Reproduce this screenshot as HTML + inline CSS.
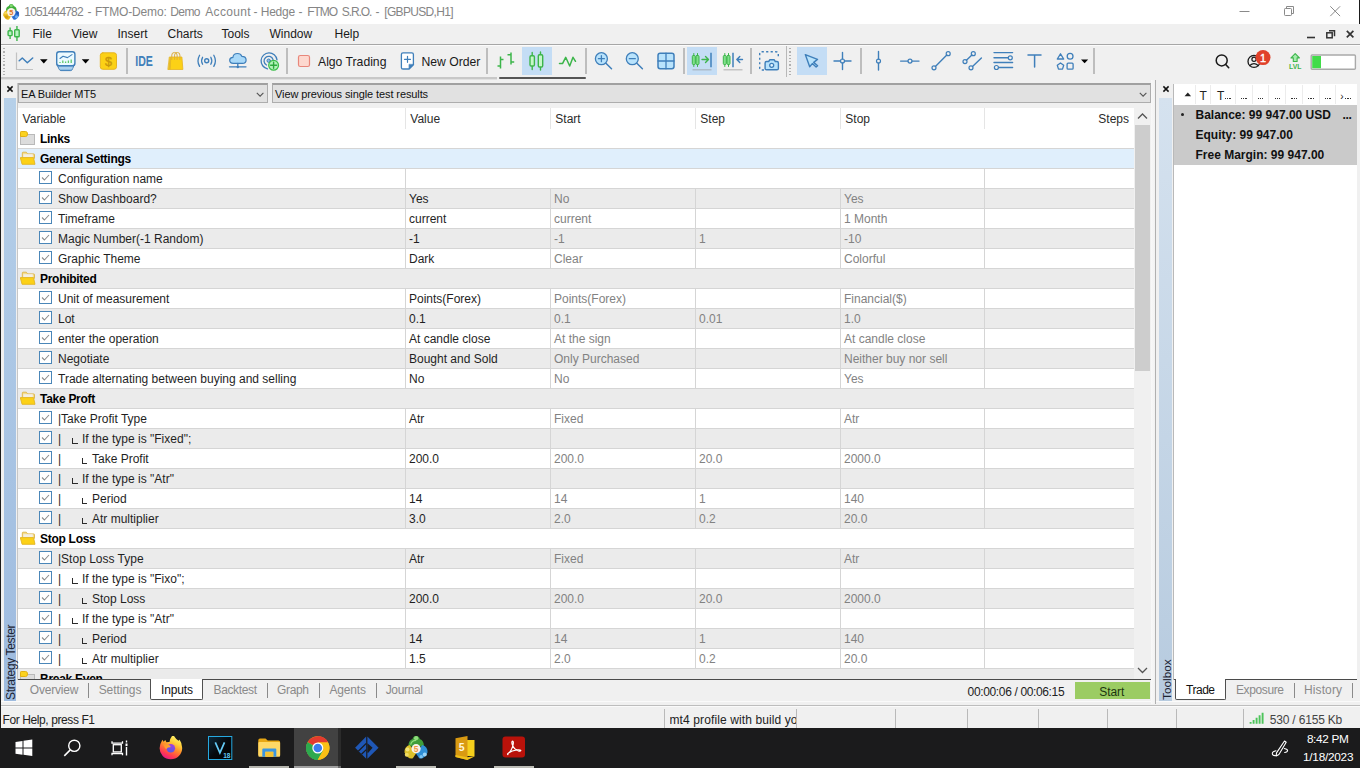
<!DOCTYPE html>
<html><head><meta charset="utf-8"><title>MT5</title>
<style>
html,body{margin:0;padding:0;}
body{width:1360px;height:768px;overflow:hidden;position:relative;background:#f0f0f0;font-family:"Liberation Sans", sans-serif;}
div,svg{position:absolute;box-sizing:border-box;}
.t{white-space:pre;}
</style></head><body>
<div style="left:0px;top:0px;width:1360px;height:24px;background:#ffffff;"></div>
<svg style="left:3px;top:3px" width="18" height="18" viewBox="0 0 18 18">
<path d="M3 8.300q-0.300-4.300 2.800-5.300 0.500-2 2.500-2t2.500 2q3.100 1 2.800 5.300z" fill="#3fae3a"/>
<circle cx="8.300" cy="2.700" r="1.500" fill="#7fd66e"/>
<path d="M0.200 12.500q-0.200-4 3.600-5.200l4.500 5.700-2.300 3.500q-3.300 1-5.800-4z" fill="#e8b91b"/>
<circle cx="2.500" cy="10" r="1.500" fill="#f5d75a"/><circle cx="3.500" cy="14" r="1.600" fill="#d29f10"/>
<path d="M16.200 12.500q0.200-4-3.600-5.200l-4.500 5.700 2.300 3.500q3.300 1 5.800-4z" fill="#2b6fd3"/>
<circle cx="13.500" cy="13.700" r="1.500" fill="#6eb0f2"/><circle cx="14.600" cy="10" r="1.400" fill="#1d57b4"/>
<circle cx="8.250" cy="9.200" r="4.200" fill="#f7f0e6"/>
<text x="8.250" y="11.800" font-family="Liberation Sans" font-size="7.300" font-weight="700" fill="#dd7418" text-anchor="middle">5</text>
</svg>
<div class="t" style="top:3.5px;height:17px;line-height:17px;font-size:12px;color:#858585;left:24.3px;letter-spacing:-0.827px;">1051444782</div>
<div class="t" style="top:3.5px;height:17px;line-height:17px;font-size:12px;color:#858585;left:87.5px;">-</div>
<div class="t" style="top:3.5px;height:17px;line-height:17px;font-size:12px;color:#858585;left:94.89999999999999px;letter-spacing:-0.165px;">FTMO-Demo:</div>
<div class="t" style="top:3.5px;height:17px;line-height:17px;font-size:12px;color:#858585;left:170.3px;letter-spacing:-0.604px;">Demo</div>
<div class="t" style="top:3.5px;height:17px;line-height:17px;font-size:12px;color:#858585;left:205.3px;letter-spacing:0.307px;">Account</div>
<div class="t" style="top:3.5px;height:17px;line-height:17px;font-size:12px;color:#858585;left:253.5px;">-</div>
<div class="t" style="top:3.5px;height:17px;line-height:17px;font-size:12px;color:#858585;left:260.8px;letter-spacing:-0.266px;">Hedge</div>
<div class="t" style="top:3.5px;height:17px;line-height:17px;font-size:12px;color:#858585;left:298.5px;">-</div>
<div class="t" style="top:3.5px;height:17px;line-height:17px;font-size:12px;color:#858585;left:307.2px;letter-spacing:-0.997px;">FTMO</div>
<div class="t" style="top:3.5px;height:17px;line-height:17px;font-size:12px;color:#858585;left:341.8px;letter-spacing:-1.081px;">S.R.O.</div>
<div class="t" style="top:3.5px;height:17px;line-height:17px;font-size:12px;color:#858585;left:375.5px;">-</div>
<div class="t" style="top:3.5px;height:17px;line-height:17px;font-size:12px;color:#858585;left:384.3px;letter-spacing:-0.682px;">[GBPUSD,H1]</div>
<svg style="left:1230px;top:0" width="130" height="24" viewBox="0 0 130 24">
<path d="M9.5 11.5h10" stroke="#8a8a8a" stroke-width="1" fill="none"/>
<path d="M56.500 8V6.500H63.500V13.500H62" stroke="#8a8a8a" stroke-width="1" fill="none"/>
<rect x="54.500" y="8.500" width="7" height="7" rx="0.800" stroke="#8a8a8a" stroke-width="1" fill="#fff"/>
<path d="M100.300 6.300l9.800 9.800M110.100 6.300l-9.800 9.800" stroke="#8a8a8a" stroke-width="1" fill="none"/>
</svg>
<div style="left:0px;top:0px;width:1px;height:728px;background:#1b1b1b;"></div>
<div style="left:1359px;top:0px;width:1px;height:24px;background:#1b1b1b;"></div>
<div style="left:1px;top:24px;width:1359px;height:21px;background:#f0f0f0;"></div>
<div style="left:1px;top:44px;width:1359px;height:1px;background:#a6a6a6;"></div>
<svg style="left:5px;top:25px" width="18" height="18" viewBox="0 0 18 18">
<path d="M5.100 2.500v3M5.100 10.700v3.300M11.950 1v3.500M11.950 12v4" stroke="#3cb54a" stroke-width="1.400" fill="none"/>
<rect x="3.100" y="5.700" width="4" height="4.900" rx="0.800" fill="#b9f4c2" stroke="#3cb54a" stroke-width="1.400"/>
<rect x="9.700" y="4.700" width="4.500" height="7.100" rx="0.800" fill="#b9f4c2" stroke="#3cb54a" stroke-width="1.400"/>
</svg>
<div class="t" style="top:26.3px;height:17px;line-height:17px;font-size:12px;color:#1a1a1a;left:32.5px;">File</div>
<div class="t" style="top:26.3px;height:17px;line-height:17px;font-size:12px;color:#1a1a1a;left:71.5px;">View</div>
<div class="t" style="top:26.3px;height:17px;line-height:17px;font-size:12px;color:#1a1a1a;left:117.5px;">Insert</div>
<div class="t" style="top:26.3px;height:17px;line-height:17px;font-size:12px;color:#1a1a1a;left:167.5px;">Charts</div>
<div class="t" style="top:26.3px;height:17px;line-height:17px;font-size:12px;color:#1a1a1a;left:221.5px;">Tools</div>
<div class="t" style="top:26.3px;height:17px;line-height:17px;font-size:12px;color:#1a1a1a;left:269.5px;">Window</div>
<div class="t" style="top:26.3px;height:17px;line-height:17px;font-size:12px;color:#1a1a1a;left:334.5px;">Help</div>
<svg style="left:1300px;top:26px" width="60" height="16" viewBox="0 0 60 16">
<path d="M7 11.500h8" stroke="#333" stroke-width="1.600" fill="none"/>
<path d="M29 4.800h5.500v5.500" stroke="#333" stroke-width="1.500" fill="none"/>
<rect x="26.800" y="6.800" width="5.400" height="5" stroke="#333" stroke-width="1.500" fill="#f0f0f0"/>
<path d="M46.800 4.800l6.600 6.600M53.400 4.800l-6.600 6.600" stroke="#333" stroke-width="1.700" fill="none"/>
</svg>
<div style="left:1px;top:45px;width:1359px;height:33px;background:#f0f0f0;"></div>
<div style="left:1px;top:45px;width:1359px;height:1px;background:#fbfbfb;"></div>
<div style="left:1px;top:77px;width:496px;height:2px;background:#c8c8c8;"></div>
<div style="left:1px;top:79px;width:496px;height:1px;background:#e0e0e0;"></div>
<div style="left:3.200px;top:47.500px;width:1.400px;height:29px;background:repeating-linear-gradient(to bottom,#b0b0b0 0 1.25px,transparent 1.25px 3.25px);"></div>
<div style="left:786px;top:46px;width:1px;height:31px;background:#b8b8b8;"></div>
<div style="left:789.200px;top:47.500px;width:1.400px;height:29px;background:repeating-linear-gradient(to bottom,#b0b0b0 0 1.25px,transparent 1.25px 3.25px);"></div>
<div style="left:125.5px;top:48px;width:2px;height:26.3px;background:#bdbdbd;"></div>
<div style="left:286px;top:48px;width:2px;height:26.3px;background:#bdbdbd;"></div>
<div style="left:486px;top:48px;width:2px;height:26.3px;background:#bdbdbd;"></div>
<div style="left:584.6px;top:48px;width:2px;height:26.3px;background:#bdbdbd;"></div>
<div style="left:682.7px;top:48px;width:2px;height:26.3px;background:#bdbdbd;"></div>
<div style="left:750px;top:48px;width:2px;height:26.3px;background:#bdbdbd;"></div>
<div style="left:859.7px;top:48px;width:2px;height:26.3px;background:#bdbdbd;"></div>
<div style="left:1092.9px;top:48px;width:2px;height:26.3px;background:#bdbdbd;"></div>
<div style="left:522px;top:47px;width:30px;height:28px;background:#c4ddf5;"></div>
<div style="left:687px;top:47px;width:30px;height:28px;background:#c4ddf5;"></div>
<div style="left:797px;top:47px;width:30px;height:28px;background:#c4ddf5;"></div>
<div style="left:499px;top:77px;width:87px;height:2px;background:#555;border-radius:1px;"></div>
<div class="t" style="top:54px;height:17px;line-height:17px;font-size:12.2px;color:#1a1a1a;left:318px;">Algo Trading</div>
<div class="t" style="top:54px;height:17px;line-height:17px;font-size:12.2px;color:#1a1a1a;left:421.5px;">New Order</div>
<svg style="left:0;top:44px" width="1360" height="36" viewBox="0 44 1360 36" fill="none" stroke-linecap="round" stroke-linejoin="round"><path d="M16.500 52.500V69.500H33" stroke="#c2c2c2" stroke-width="1.200" stroke-linecap="butt"/><path d="M19.200 60.800L22.300 58 27.300 62.700 32.700 58" stroke="#3f7fba" stroke-width="1.500"/><path d="M40 59.300h7.600l-3.800 4.200z" fill="#000"/><path d="M57.200 64.500h17.200l-2.300 5.300q-0.400 0.800-1.300 0.800h-10q-0.900 0-1.300-0.800z" fill="#8fbde3" stroke="#3f7fba" stroke-width="1"/><path d="M59.300 68h13" stroke="#cfe6f8" stroke-width="0.900"/><rect x="56.700" y="51.700" width="18.200" height="14" rx="2.500" fill="#ecfaff" stroke="#3f7fba" stroke-width="1.400"/><path d="M60 58.500l3-2.200 4.500 1.300 4.500-3" stroke="#3f7fba" stroke-width="1.100"/><path d="M60 63v-1M62.800 63v-2.500M65.600 63v-1.600M68.400 63v-2.500M71.200 63v-3.500" stroke="#5fc86a" stroke-width="1.300" stroke-linecap="butt"/><path d="M81.800 59.300h7.600l-3.800 4.200z" fill="#000"/><rect x="100.300" y="52.800" width="16.200" height="16.500" rx="2.500" fill="#fcd116" stroke="#e6b422" stroke-width="1"/><text x="108.400" y="65.500" font-family="Liberation Sans" font-size="12.500" fill="#c8970c" stroke="#c8970c" stroke-width="0.400" text-anchor="middle">$</text><text x="135.300" y="66" font-family="Liberation Sans" font-size="14" font-weight="700" fill="#3f7fba" stroke="none" textLength="17.600" lengthAdjust="spacingAndGlyphs">IDE</text><path d="M169.700 57h12.200l1 12.500h-14.700z" fill="#fcd116" stroke="#e6b422" stroke-width="0.800"/><path d="M169.700 57h1.600l-0.600 12.500h-2.500z" fill="#e6ba24" stroke="none"/><path d="M171.800 59.500v-4.400q0-2.600 2.500-2.600h0.300q2.500 0 2.500 2.600v4.400" stroke="#dcae3c" stroke-width="1"/><path d="M174.600 59.500v-4.400q0-2.600 2.500-2.600h0.300q2.500 0 2.500 2.600v4.400" stroke="#dcae3c" stroke-width="1"/><circle cx="206.700" cy="60.800" r="2" stroke="#3f7fba" stroke-width="1.400"/><path d="M202.600 57.300q-2 3.500 0 7M210.800 57.300q2 3.500 0 7M199.600 55.200q-3.200 5.600 0 11.200M213.800 55.200q3.200 5.600 0 11.200" stroke="#3f7fba" stroke-width="1.300"/><path d="M233.200 63.300q-3.500 0-3.500-3 0-2.800 3.200-3 0.500-3.800 4.600-3.800 3.300 0 4.300 2.800 4.300 0.100 4.300 3.600 0 3.400-3.600 3.400z" fill="#a9d9f9" stroke="#3f7fba" stroke-width="1.200"/><path d="M229.500 66.800h16.500M237.800 63.500v3.300" stroke="#3f7fba" stroke-width="1.300"/><circle cx="237.800" cy="67" r="1.200" fill="#3f7fba"/><path d="M267.500 68.800a8 8 0 1 1 9.500-9" stroke="#3f7fba" stroke-width="1.300"/><path d="M266.500 65a4.600 4.600 0 1 1 6.500-5.500" stroke="#3f7fba" stroke-width="1.300"/><circle cx="268.700" cy="60.700" r="1.700" fill="#8fbde3" stroke="#3f7fba" stroke-width="1"/><circle cx="273.600" cy="65.300" r="4.900" fill="#b2f3b9" stroke="#3dbd4b" stroke-width="1.300"/><path d="M273.600 62.300v6M270.600 65.300h6" stroke="#2ea73e" stroke-width="1.400"/><rect x="298.500" y="55.500" width="11" height="11" rx="1.800" fill="#fdd8cf" stroke="#e8877b" stroke-width="1.200"/><path d="M403 52.800h8.800q1.600 0 1.600 1.600v10.300l-4.300 4.300h-6.100q-1.600 0-1.600-1.600v-13q0-1.600 1.600-1.600z" fill="#fff" stroke="#3f7fba" stroke-width="1.300"/><path d="M413.400 64.700l-4.300 4.300v-4.300z" fill="#3f7fba" stroke="#3f7fba" stroke-width="0.800"/><path d="M407.500 56.300v6M404.500 59.300h6" stroke="#3f7fba" stroke-width="1.200"/><path d="M500.500 56.500v12M497.500 66h3M500.500 59.500h3M511 52.500v12M507.500 54.700h3.500M511 62h3.200" stroke="#3cb54a" stroke-width="1.500" stroke-linecap="butt"/><path d="M532.200 52.500v17M540.500 52v18" stroke="#3cb54a" stroke-width="1.400"/><rect x="530" y="55.700" width="4.400" height="10.300" rx="1.200" fill="#c5f7c8" stroke="#3cb54a" stroke-width="1.400"/><rect x="538.300" y="54.700" width="4.400" height="12.300" rx="1.200" fill="#c5f7c8" stroke="#3cb54a" stroke-width="1.400"/><path d="M559.500 63.600h3l3.200-6.300 4 8.700 3.300-8.700 2.500 4" stroke="#3cb54a" stroke-width="1.500"/><path d="M605.6999999999999 63l5.800 5.800" stroke="#3f7fba" stroke-width="1.500"/><circle cx="601.4" cy="58.700" r="6" fill="#b9e3fc" stroke="#3f7fba" stroke-width="1.300"/><path d="M598.4 58.700h6" stroke="#3f7fba" stroke-width="1.300"/><path d="M601.4 55.700v6" stroke="#3f7fba" stroke-width="1.300"/><path d="M636.5999999999999 63l5.800 5.800" stroke="#3f7fba" stroke-width="1.500"/><circle cx="632.3" cy="58.700" r="6" fill="#b9e3fc" stroke="#3f7fba" stroke-width="1.300"/><path d="M629.3 58.700h6" stroke="#3f7fba" stroke-width="1.300"/><rect x="658" y="53.200" width="16" height="15.600" rx="2.200" fill="#b9e3fc" stroke="#3f7fba" stroke-width="1.500"/><path d="M666 53.200v15.600M658 61h16" stroke="#3f7fba" stroke-width="1.300"/><path d="M693.8 53.500v13M697.5 53.500v13" stroke="#3cb54a" stroke-width="1"/><rect x="692.3" y="55.500" width="3" height="9" rx="1" fill="#7fe08a" stroke="#3cb54a" stroke-width="1"/><rect x="696.0" y="55.500" width="3" height="9" rx="1" fill="#7fe08a" stroke="#3cb54a" stroke-width="1"/><path d="M702 59.500h6.200M705.500 56.500l3 3-3 3" stroke="#3cb54a" stroke-width="1.400"/><path d="M711 52.700v14.500" stroke="#3f7fba" stroke-width="1.500" stroke-linecap="butt"/><path d="M692.500 69.800h19" stroke="#a9b4bf" stroke-width="1.200" stroke-linecap="butt"/><path d="M724.8 53.500v13M728.5 53.500v13" stroke="#3cb54a" stroke-width="1"/><rect x="723.3" y="55.500" width="3" height="9" rx="1" fill="#7fe08a" stroke="#3cb54a" stroke-width="1"/><rect x="727.0" y="55.500" width="3" height="9" rx="1" fill="#7fe08a" stroke="#3cb54a" stroke-width="1"/><path d="M733 52.700v14.500" stroke="#3f7fba" stroke-width="1.500" stroke-linecap="butt"/><path d="M736.800 59.500h5.700M739.800 56.500l-3 3 3 3" stroke="#3f7fba" stroke-width="1.400"/><path d="M723.500 69.800h19" stroke="#b9b9b9" stroke-width="1.200" stroke-linecap="butt"/><path d="M764 70h-2q-2.300 0-2.300-2.300v-13.600q0-2.300 2.300-2.300h14q2.300 0 2.300 2.300v3.500" stroke="#3f7fba" stroke-width="1.400" stroke-dasharray="2.200 2.300" stroke-linecap="butt"/><path d="M766.500 61.500h2.200l1.200-1.800h4.200l1.200 1.800h1.700q1.400 0 1.400 1.400v5.500q0 1.400-1.400 1.400h-10.500q-1.400 0-1.400-1.400v-5.500q0-1.400 1.400-1.400z" fill="#b9e3fc" stroke="#3f7fba" stroke-width="1.400"/><circle cx="771.700" cy="65.300" r="2" fill="#e4f5ff" stroke="#3f7fba" stroke-width="1.300"/><path d="M805.300 54.600l12.200 4.800-3.800 3 3.900 3.300-1.500 1.300-3.800-3.400-2.600 3.200z" fill="#b9e3fc" stroke="#3f7fba" stroke-width="1.400"/><path d="M834 61h6.500M844.500 61h6.500M842.500 52.500v6.500M842.500 63v6.500" stroke="#3f7fba" stroke-width="1.400"/><circle cx="842.500" cy="61" r="2" stroke="#3f7fba" stroke-width="1.200"/><path d="M878.500 51.500v7.600M878.500 63.100v7" stroke="#3f7fba" stroke-width="1.400"/><circle cx="878.500" cy="61.100" r="2" stroke="#3f7fba" stroke-width="1.200"/><path d="M900.600 61.100h7.400M912 61.100h7" stroke="#3f7fba" stroke-width="1.400"/><circle cx="910" cy="61.100" r="2" stroke="#3f7fba" stroke-width="1.200"/><path d="M935.400 66.400l11.400-11.300" stroke="#3f7fba" stroke-width="1.400"/><circle cx="934" cy="67.800" r="2" stroke="#3f7fba" stroke-width="1.200"/><circle cx="948.200" cy="53.700" r="2" stroke="#3f7fba" stroke-width="1.200"/><path d="M966.400 60.200l5.500-5.100M972.500 66.400l8.900-8.300" stroke="#3f7fba" stroke-width="1.400"/><circle cx="965" cy="61.600" r="2" stroke="#3f7fba" stroke-width="1.200"/><circle cx="973.300" cy="53.700" r="2" stroke="#3f7fba" stroke-width="1.200"/><circle cx="971" cy="67.800" r="2" stroke="#3f7fba" stroke-width="1.200"/><path d="M994 52.600h18.600M994 57.800h14.300M994 62.500h18.600M998.400 67.500h14.200" stroke="#3f7fba" stroke-width="1.400"/><circle cx="1010.300" cy="57.800" r="2" fill="#f0f0f0" stroke="#3f7fba" stroke-width="1.200"/><circle cx="996.400" cy="67.500" r="2" fill="#f0f0f0" stroke="#3f7fba" stroke-width="1.200"/><path d="M1028 55h13M1034.600 55v12" stroke="#3f7fba" stroke-width="1.500"/><path d="M1060.500 53.800l3.200 5.200h-6.400z" stroke="#3f7fba" stroke-width="1.300"/><circle cx="1070.100" cy="56.300" r="2.900" stroke="#3f7fba" stroke-width="1.300"/><path d="M1060.500 63l3.200 2.300-1.200 3.800h-4l-1.200-3.800z" stroke="#3f7fba" stroke-width="1.300"/><rect x="1067.100" y="63.200" width="6" height="6" rx="1" stroke="#3f7fba" stroke-width="1.300"/><path d="M1081 59.500h7.200l-3.600 3.700z" fill="#000"/><circle cx="1221.700" cy="60.400" r="5.500" stroke="#1a1a1a" stroke-width="1.500"/><path d="M1225.700 64.500l3 3.200" stroke="#1a1a1a" stroke-width="1.600"/><circle cx="1254" cy="61.400" r="6" stroke="#1a1a1a" stroke-width="1.300"/><circle cx="1254" cy="59.300" r="2.100" stroke="#1a1a1a" stroke-width="1.200"/><path d="M1249.800 65.500q4.200-3.600 8.400 0" stroke="#1a1a1a" stroke-width="1.200"/><circle cx="1263" cy="57.600" r="7.500" fill="#e0412a"/><text x="1263" y="62" font-family="Liberation Sans" font-size="11" fill="#fff" stroke="#fff" stroke-width="0.350" text-anchor="middle">1</text><path d="M1295.200 53.600l4.200 4.300h-2.300v3.600h-3.800v-3.600h-2.300z" fill="#a6ecae" stroke="#3cb54a" stroke-width="1.100"/><text x="1289" y="69" font-family="Liberation Sans" font-size="7.500" font-weight="700" fill="#3cb54a" stroke="none" textLength="12.400" lengthAdjust="spacingAndGlyphs">LVL</text><rect x="1311.200" y="55" width="44.200" height="14.200" rx="1" fill="#fff" stroke="#a9a9a9" stroke-width="1.400"/><rect x="1312.200" y="56" width="8.800" height="12.200" fill="#41dc49"/></svg>
<div style="left:17px;top:83px;width:1px;height:597px;background:#c6c6c6;"></div>
<div style="left:3.700px;top:98px;width:12.300px;height:603px;background:linear-gradient(to bottom,#b6d0e9,#9ebbdf);"></div>
<svg style="left:4.700px;top:84.100px" width="10" height="10" viewBox="0 0 10 10"><path d="M2.400 2.400l5.200 5.200M7.600 2.400l-5.200 5.200" stroke="#111" stroke-width="1.500" fill="none"/></svg>
<div style="left:18px;top:83px;width:250px;height:20px;background:#e1e1e1;border:1px solid #adadad;border-top:2px solid #a0a0a0;"></div>
<div class="t" style="top:86px;height:17px;line-height:17px;font-size:11px;color:#111;left:21px;letter-spacing:-0.1px;">EA Builder MT5</div>
<svg style="left:255.5px;top:91.500px" width="9" height="6" viewBox="0 0 9 6"><path d="M0.800 0.800l3.300 3.300 3.300-3.300" stroke="#555" stroke-width="1.100" fill="none"/></svg>
<div style="left:272px;top:83px;width:879px;height:20px;background:#e1e1e1;border:1px solid #adadad;border-top:2px solid #a0a0a0;"></div>
<div class="t" style="top:86px;height:17px;line-height:17px;font-size:11px;color:#111;left:275px;letter-spacing:-0.1px;">View previous single test results</div>
<svg style="left:1138.5px;top:91.500px" width="9" height="6" viewBox="0 0 9 6"><path d="M0.800 0.800l3.300 3.300 3.300-3.300" stroke="#555" stroke-width="1.100" fill="none"/></svg>
<div style="left:18px;top:108px;width:1116px;height:571px;background:#ffffff;"></div>
<div class="t" style="top:111px;height:17px;line-height:17px;font-size:12px;color:#2b2b2b;left:22.6px;">Variable</div>
<div class="t" style="top:111px;height:17px;line-height:17px;font-size:12px;color:#2b2b2b;left:410.3px;">Value</div>
<div class="t" style="top:111px;height:17px;line-height:17px;font-size:12px;color:#2b2b2b;left:555.3px;">Start</div>
<div class="t" style="top:111px;height:17px;line-height:17px;font-size:12px;color:#2b2b2b;left:700.3px;">Step</div>
<div class="t" style="top:111px;height:17px;line-height:17px;font-size:12px;color:#2b2b2b;left:845.3px;">Stop</div>
<div class="t" style="top:111px;height:17px;line-height:17px;font-size:12px;color:#2b2b2b;right:231px;">Steps</div>
<div style="left:405px;top:108px;width:1px;height:21px;background:#e5e5e5;"></div>
<div style="left:550px;top:108px;width:1px;height:21px;background:#e5e5e5;"></div>
<div style="left:695px;top:108px;width:1px;height:21px;background:#e5e5e5;"></div>
<div style="left:840px;top:108px;width:1px;height:21px;background:#e5e5e5;"></div>
<div style="left:984px;top:108px;width:1px;height:21px;background:#e5e5e5;"></div>
<div style="left:18px;top:108px;width:1116px;height:571px;overflow:hidden;"><div style="left:0;top:21px;width:1116px;height:19px;background:#ffffff;"></div><div style="left:0;top:40px;width:1116px;height:1px;background:#d5d5d5;"></div><svg style="left:2px;top:23px" width="16" height="14" viewBox="0 0 16 14">
<rect x="0.500" y="3.500" width="14" height="10" fill="#dcdcdc" stroke="#b9b9b9" stroke-width="1"/>
<path d="M0.500 5.500V1.200q0-0.700 0.700-0.700h4.500q1.800 0 1.800 2.500v0q0 2.500-1.800 2.500z" fill="#fbd21f" stroke="#e2b013" stroke-width="1"/>
</svg><div class="t" style="left:22px;top:23px;height:17px;line-height:17px;font-size:12px;color:#000;font-weight:700;letter-spacing:-0.28px;">Links</div><div style="left:0;top:41px;width:1116px;height:19px;background:#e0effc;"></div><div style="left:0;top:60px;width:1116px;height:1px;background:#d5d5d5;"></div><svg style="left:2px;top:43px" width="17" height="14" viewBox="0 0 17 14">
<path d="M2.300 6.500V1.900q0-0.700 0.700-0.700h3.300l1.300 1.700h6.200q0.700 0 0.700 0.700v4" fill="#f6dd8c" stroke="#dcb347" stroke-width="0.900"/>
<path d="M3.300 3.200h9.500v3.300h-9.500z" fill="#f3efe4"/>
<path d="M0.300 6.600h13.200l1.500 6.700H2.100z" fill="#fcd116" stroke="#e2b422" stroke-width="0.900" stroke-linejoin="round"/>
</svg><div class="t" style="left:22px;top:43px;height:17px;line-height:17px;font-size:12px;color:#000;font-weight:700;letter-spacing:-0.28px;">General Settings</div><div style="left:0;top:61px;width:1116px;height:19px;background:#ffffff;"></div><div style="left:0;top:80px;width:1116px;height:1px;background:#d5d5d5;"></div><svg style="left:21px;top:63.2px" width="13" height="13" viewBox="0 0 13 13">
<rect x="0.500" y="0.500" width="12" height="12" fill="#fff" stroke="#4a86b8" stroke-width="1"/>
<path d="M3 6.500l2.400 2.500 4.600-5" stroke="#8d8d8d" stroke-width="1.100" fill="none"/>
</svg><div class="t" style="left:40px;top:63px;height:17px;line-height:17px;font-size:12px;color:#1f1f1f;">Configuration name</div><div style="left:387px;top:61px;width:1px;height:19px;background:#d5d5d5;"></div><div style="left:966px;top:61px;width:1px;height:19px;background:#d5d5d5;"></div><div style="left:0;top:81px;width:1116px;height:19px;background:#ebebeb;"></div><div style="left:0;top:100px;width:1116px;height:1px;background:#d5d5d5;"></div><svg style="left:21px;top:83.2px" width="13" height="13" viewBox="0 0 13 13">
<rect x="0.500" y="0.500" width="12" height="12" fill="#fff" stroke="#4a86b8" stroke-width="1"/>
<path d="M3 6.500l2.400 2.500 4.600-5" stroke="#8d8d8d" stroke-width="1.100" fill="none"/>
</svg><div class="t" style="left:40px;top:83px;height:17px;line-height:17px;font-size:12px;color:#1f1f1f;">Show Dashboard?</div><div class="t" style="left:391px;top:83px;height:17px;line-height:17px;font-size:12px;color:#1f1f1f;">Yes</div><div class="t" style="left:536px;top:83px;height:17px;line-height:17px;font-size:12px;color:#828282;">No</div><div class="t" style="left:826px;top:83px;height:17px;line-height:17px;font-size:12px;color:#828282;">Yes</div><div style="left:387px;top:81px;width:1px;height:19px;background:#d5d5d5;"></div><div style="left:532px;top:81px;width:1px;height:19px;background:#d5d5d5;"></div><div style="left:677px;top:81px;width:1px;height:19px;background:#d5d5d5;"></div><div style="left:822px;top:81px;width:1px;height:19px;background:#d5d5d5;"></div><div style="left:966px;top:81px;width:1px;height:19px;background:#d5d5d5;"></div><div style="left:0;top:101px;width:1116px;height:19px;background:#ffffff;"></div><div style="left:0;top:120px;width:1116px;height:1px;background:#d5d5d5;"></div><svg style="left:21px;top:103.2px" width="13" height="13" viewBox="0 0 13 13">
<rect x="0.500" y="0.500" width="12" height="12" fill="#fff" stroke="#4a86b8" stroke-width="1"/>
<path d="M3 6.500l2.400 2.500 4.600-5" stroke="#8d8d8d" stroke-width="1.100" fill="none"/>
</svg><div class="t" style="left:40px;top:103px;height:17px;line-height:17px;font-size:12px;color:#1f1f1f;">Timeframe</div><div class="t" style="left:391px;top:103px;height:17px;line-height:17px;font-size:12px;color:#1f1f1f;">current</div><div class="t" style="left:536px;top:103px;height:17px;line-height:17px;font-size:12px;color:#828282;">current</div><div class="t" style="left:826px;top:103px;height:17px;line-height:17px;font-size:12px;color:#828282;">1 Month</div><div style="left:387px;top:101px;width:1px;height:19px;background:#d5d5d5;"></div><div style="left:532px;top:101px;width:1px;height:19px;background:#d5d5d5;"></div><div style="left:677px;top:101px;width:1px;height:19px;background:#d5d5d5;"></div><div style="left:822px;top:101px;width:1px;height:19px;background:#d5d5d5;"></div><div style="left:966px;top:101px;width:1px;height:19px;background:#d5d5d5;"></div><div style="left:0;top:121px;width:1116px;height:19px;background:#ebebeb;"></div><div style="left:0;top:140px;width:1116px;height:1px;background:#d5d5d5;"></div><svg style="left:21px;top:123.2px" width="13" height="13" viewBox="0 0 13 13">
<rect x="0.500" y="0.500" width="12" height="12" fill="#fff" stroke="#4a86b8" stroke-width="1"/>
<path d="M3 6.500l2.400 2.500 4.600-5" stroke="#8d8d8d" stroke-width="1.100" fill="none"/>
</svg><div class="t" style="left:40px;top:123px;height:17px;line-height:17px;font-size:12px;color:#1f1f1f;">Magic Number(-1 Random)</div><div class="t" style="left:391px;top:123px;height:17px;line-height:17px;font-size:12px;color:#1f1f1f;">-1</div><div class="t" style="left:536px;top:123px;height:17px;line-height:17px;font-size:12px;color:#828282;">-1</div><div class="t" style="left:681px;top:123px;height:17px;line-height:17px;font-size:12px;color:#828282;">1</div><div class="t" style="left:826px;top:123px;height:17px;line-height:17px;font-size:12px;color:#828282;">-10</div><div style="left:387px;top:121px;width:1px;height:19px;background:#d5d5d5;"></div><div style="left:532px;top:121px;width:1px;height:19px;background:#d5d5d5;"></div><div style="left:677px;top:121px;width:1px;height:19px;background:#d5d5d5;"></div><div style="left:822px;top:121px;width:1px;height:19px;background:#d5d5d5;"></div><div style="left:966px;top:121px;width:1px;height:19px;background:#d5d5d5;"></div><div style="left:0;top:141px;width:1116px;height:19px;background:#ffffff;"></div><div style="left:0;top:160px;width:1116px;height:1px;background:#d5d5d5;"></div><svg style="left:21px;top:143.2px" width="13" height="13" viewBox="0 0 13 13">
<rect x="0.500" y="0.500" width="12" height="12" fill="#fff" stroke="#4a86b8" stroke-width="1"/>
<path d="M3 6.500l2.400 2.500 4.600-5" stroke="#8d8d8d" stroke-width="1.100" fill="none"/>
</svg><div class="t" style="left:40px;top:143px;height:17px;line-height:17px;font-size:12px;color:#1f1f1f;">Graphic Theme</div><div class="t" style="left:391px;top:143px;height:17px;line-height:17px;font-size:12px;color:#1f1f1f;">Dark</div><div class="t" style="left:536px;top:143px;height:17px;line-height:17px;font-size:12px;color:#828282;">Clear</div><div class="t" style="left:826px;top:143px;height:17px;line-height:17px;font-size:12px;color:#828282;">Colorful</div><div style="left:387px;top:141px;width:1px;height:19px;background:#d5d5d5;"></div><div style="left:532px;top:141px;width:1px;height:19px;background:#d5d5d5;"></div><div style="left:677px;top:141px;width:1px;height:19px;background:#d5d5d5;"></div><div style="left:822px;top:141px;width:1px;height:19px;background:#d5d5d5;"></div><div style="left:966px;top:141px;width:1px;height:19px;background:#d5d5d5;"></div><div style="left:0;top:161px;width:1116px;height:19px;background:#ebebeb;"></div><div style="left:0;top:180px;width:1116px;height:1px;background:#d5d5d5;"></div><svg style="left:2px;top:163px" width="17" height="14" viewBox="0 0 17 14">
<path d="M2.300 6.500V1.900q0-0.700 0.700-0.700h3.300l1.300 1.700h6.200q0.700 0 0.700 0.700v4" fill="#f6dd8c" stroke="#dcb347" stroke-width="0.900"/>
<path d="M3.300 3.200h9.500v3.300h-9.500z" fill="#f3efe4"/>
<path d="M0.300 6.600h13.200l1.500 6.700H2.100z" fill="#fcd116" stroke="#e2b422" stroke-width="0.900" stroke-linejoin="round"/>
</svg><div class="t" style="left:22px;top:163px;height:17px;line-height:17px;font-size:12px;color:#000;font-weight:700;letter-spacing:-0.28px;">Prohibited</div><div style="left:0;top:181px;width:1116px;height:19px;background:#ffffff;"></div><div style="left:0;top:200px;width:1116px;height:1px;background:#d5d5d5;"></div><svg style="left:21px;top:183.2px" width="13" height="13" viewBox="0 0 13 13">
<rect x="0.500" y="0.500" width="12" height="12" fill="#fff" stroke="#4a86b8" stroke-width="1"/>
<path d="M3 6.500l2.400 2.500 4.600-5" stroke="#8d8d8d" stroke-width="1.100" fill="none"/>
</svg><div class="t" style="left:40px;top:183px;height:17px;line-height:17px;font-size:12px;color:#1f1f1f;">Unit of measurement</div><div class="t" style="left:391px;top:183px;height:17px;line-height:17px;font-size:12px;color:#1f1f1f;">Points(Forex)</div><div class="t" style="left:536px;top:183px;height:17px;line-height:17px;font-size:12px;color:#828282;">Points(Forex)</div><div class="t" style="left:826px;top:183px;height:17px;line-height:17px;font-size:12px;color:#828282;">Financial($)</div><div style="left:387px;top:181px;width:1px;height:19px;background:#d5d5d5;"></div><div style="left:532px;top:181px;width:1px;height:19px;background:#d5d5d5;"></div><div style="left:677px;top:181px;width:1px;height:19px;background:#d5d5d5;"></div><div style="left:822px;top:181px;width:1px;height:19px;background:#d5d5d5;"></div><div style="left:966px;top:181px;width:1px;height:19px;background:#d5d5d5;"></div><div style="left:0;top:201px;width:1116px;height:19px;background:#ebebeb;"></div><div style="left:0;top:220px;width:1116px;height:1px;background:#d5d5d5;"></div><svg style="left:21px;top:203.2px" width="13" height="13" viewBox="0 0 13 13">
<rect x="0.500" y="0.500" width="12" height="12" fill="#fff" stroke="#4a86b8" stroke-width="1"/>
<path d="M3 6.500l2.400 2.500 4.600-5" stroke="#8d8d8d" stroke-width="1.100" fill="none"/>
</svg><div class="t" style="left:40px;top:203px;height:17px;line-height:17px;font-size:12px;color:#1f1f1f;">Lot</div><div class="t" style="left:391px;top:203px;height:17px;line-height:17px;font-size:12px;color:#1f1f1f;">0.1</div><div class="t" style="left:536px;top:203px;height:17px;line-height:17px;font-size:12px;color:#828282;">0.1</div><div class="t" style="left:681px;top:203px;height:17px;line-height:17px;font-size:12px;color:#828282;">0.01</div><div class="t" style="left:826px;top:203px;height:17px;line-height:17px;font-size:12px;color:#828282;">1.0</div><div style="left:387px;top:201px;width:1px;height:19px;background:#d5d5d5;"></div><div style="left:532px;top:201px;width:1px;height:19px;background:#d5d5d5;"></div><div style="left:677px;top:201px;width:1px;height:19px;background:#d5d5d5;"></div><div style="left:822px;top:201px;width:1px;height:19px;background:#d5d5d5;"></div><div style="left:966px;top:201px;width:1px;height:19px;background:#d5d5d5;"></div><div style="left:0;top:221px;width:1116px;height:19px;background:#ffffff;"></div><div style="left:0;top:240px;width:1116px;height:1px;background:#d5d5d5;"></div><svg style="left:21px;top:223.2px" width="13" height="13" viewBox="0 0 13 13">
<rect x="0.500" y="0.500" width="12" height="12" fill="#fff" stroke="#4a86b8" stroke-width="1"/>
<path d="M3 6.500l2.400 2.500 4.600-5" stroke="#8d8d8d" stroke-width="1.100" fill="none"/>
</svg><div class="t" style="left:40px;top:223px;height:17px;line-height:17px;font-size:12px;color:#1f1f1f;">enter the operation</div><div class="t" style="left:391px;top:223px;height:17px;line-height:17px;font-size:12px;color:#1f1f1f;">At candle close</div><div class="t" style="left:536px;top:223px;height:17px;line-height:17px;font-size:12px;color:#828282;">At the sign</div><div class="t" style="left:826px;top:223px;height:17px;line-height:17px;font-size:12px;color:#828282;">At candle close</div><div style="left:387px;top:221px;width:1px;height:19px;background:#d5d5d5;"></div><div style="left:532px;top:221px;width:1px;height:19px;background:#d5d5d5;"></div><div style="left:677px;top:221px;width:1px;height:19px;background:#d5d5d5;"></div><div style="left:822px;top:221px;width:1px;height:19px;background:#d5d5d5;"></div><div style="left:966px;top:221px;width:1px;height:19px;background:#d5d5d5;"></div><div style="left:0;top:241px;width:1116px;height:19px;background:#ebebeb;"></div><div style="left:0;top:260px;width:1116px;height:1px;background:#d5d5d5;"></div><svg style="left:21px;top:243.2px" width="13" height="13" viewBox="0 0 13 13">
<rect x="0.500" y="0.500" width="12" height="12" fill="#fff" stroke="#4a86b8" stroke-width="1"/>
<path d="M3 6.500l2.400 2.500 4.600-5" stroke="#8d8d8d" stroke-width="1.100" fill="none"/>
</svg><div class="t" style="left:40px;top:243px;height:17px;line-height:17px;font-size:12px;color:#1f1f1f;">Negotiate</div><div class="t" style="left:391px;top:243px;height:17px;line-height:17px;font-size:12px;color:#1f1f1f;">Bought and Sold</div><div class="t" style="left:536px;top:243px;height:17px;line-height:17px;font-size:12px;color:#828282;">Only Purchased</div><div class="t" style="left:826px;top:243px;height:17px;line-height:17px;font-size:12px;color:#828282;">Neither buy nor sell</div><div style="left:387px;top:241px;width:1px;height:19px;background:#d5d5d5;"></div><div style="left:532px;top:241px;width:1px;height:19px;background:#d5d5d5;"></div><div style="left:677px;top:241px;width:1px;height:19px;background:#d5d5d5;"></div><div style="left:822px;top:241px;width:1px;height:19px;background:#d5d5d5;"></div><div style="left:966px;top:241px;width:1px;height:19px;background:#d5d5d5;"></div><div style="left:0;top:261px;width:1116px;height:19px;background:#ffffff;"></div><div style="left:0;top:280px;width:1116px;height:1px;background:#d5d5d5;"></div><svg style="left:21px;top:263.2px" width="13" height="13" viewBox="0 0 13 13">
<rect x="0.500" y="0.500" width="12" height="12" fill="#fff" stroke="#4a86b8" stroke-width="1"/>
<path d="M3 6.500l2.400 2.500 4.600-5" stroke="#8d8d8d" stroke-width="1.100" fill="none"/>
</svg><div class="t" style="left:40px;top:263px;height:17px;line-height:17px;font-size:12px;color:#1f1f1f;">Trade alternating between buying and selling</div><div class="t" style="left:391px;top:263px;height:17px;line-height:17px;font-size:12px;color:#1f1f1f;">No</div><div class="t" style="left:536px;top:263px;height:17px;line-height:17px;font-size:12px;color:#828282;">No</div><div class="t" style="left:826px;top:263px;height:17px;line-height:17px;font-size:12px;color:#828282;">Yes</div><div style="left:387px;top:261px;width:1px;height:19px;background:#d5d5d5;"></div><div style="left:532px;top:261px;width:1px;height:19px;background:#d5d5d5;"></div><div style="left:677px;top:261px;width:1px;height:19px;background:#d5d5d5;"></div><div style="left:822px;top:261px;width:1px;height:19px;background:#d5d5d5;"></div><div style="left:966px;top:261px;width:1px;height:19px;background:#d5d5d5;"></div><div style="left:0;top:281px;width:1116px;height:19px;background:#ebebeb;"></div><div style="left:0;top:300px;width:1116px;height:1px;background:#d5d5d5;"></div><svg style="left:2px;top:283px" width="17" height="14" viewBox="0 0 17 14">
<path d="M2.300 6.500V1.900q0-0.700 0.700-0.700h3.300l1.300 1.700h6.200q0.700 0 0.700 0.700v4" fill="#f6dd8c" stroke="#dcb347" stroke-width="0.900"/>
<path d="M3.300 3.200h9.500v3.300h-9.500z" fill="#f3efe4"/>
<path d="M0.300 6.600h13.200l1.500 6.700H2.100z" fill="#fcd116" stroke="#e2b422" stroke-width="0.900" stroke-linejoin="round"/>
</svg><div class="t" style="left:22px;top:283px;height:17px;line-height:17px;font-size:12px;color:#000;font-weight:700;letter-spacing:-0.28px;">Take Proft</div><div style="left:0;top:301px;width:1116px;height:19px;background:#ffffff;"></div><div style="left:0;top:320px;width:1116px;height:1px;background:#d5d5d5;"></div><svg style="left:21px;top:303.2px" width="13" height="13" viewBox="0 0 13 13">
<rect x="0.500" y="0.500" width="12" height="12" fill="#fff" stroke="#4a86b8" stroke-width="1"/>
<path d="M3 6.500l2.400 2.500 4.600-5" stroke="#8d8d8d" stroke-width="1.100" fill="none"/>
</svg><div class="t" style="left:40px;top:303px;height:17px;line-height:17px;font-size:12px;color:#1f1f1f;">|Take Profit Type</div><div class="t" style="left:391px;top:303px;height:17px;line-height:17px;font-size:12px;color:#1f1f1f;">Atr</div><div class="t" style="left:536px;top:303px;height:17px;line-height:17px;font-size:12px;color:#828282;">Fixed</div><div class="t" style="left:826px;top:303px;height:17px;line-height:17px;font-size:12px;color:#828282;">Atr</div><div style="left:387px;top:301px;width:1px;height:19px;background:#d5d5d5;"></div><div style="left:532px;top:301px;width:1px;height:19px;background:#d5d5d5;"></div><div style="left:677px;top:301px;width:1px;height:19px;background:#d5d5d5;"></div><div style="left:822px;top:301px;width:1px;height:19px;background:#d5d5d5;"></div><div style="left:966px;top:301px;width:1px;height:19px;background:#d5d5d5;"></div><div style="left:0;top:321px;width:1116px;height:19px;background:#ebebeb;"></div><div style="left:0;top:340px;width:1116px;height:1px;background:#d5d5d5;"></div><svg style="left:21px;top:323.2px" width="13" height="13" viewBox="0 0 13 13">
<rect x="0.500" y="0.500" width="12" height="12" fill="#fff" stroke="#4a86b8" stroke-width="1"/>
<path d="M3 6.500l2.400 2.500 4.600-5" stroke="#8d8d8d" stroke-width="1.100" fill="none"/>
</svg><div class="t" style="left:40px;top:323px;height:17px;line-height:17px;font-size:12px;color:#1f1f1f;">|</div><div style="left:54px;top:329.9px;width:5.800px;height:5.900px;border-left:1.400px solid #2a2a2a;border-bottom:1.400px solid #2a2a2a;"></div><div class="t" style="left:64px;top:323px;height:17px;line-height:17px;font-size:12px;color:#1f1f1f;">If the type is &quot;Fixed&quot;;</div><div style="left:387px;top:321px;width:1px;height:19px;background:#d5d5d5;"></div><div style="left:532px;top:321px;width:1px;height:19px;background:#d5d5d5;"></div><div style="left:677px;top:321px;width:1px;height:19px;background:#d5d5d5;"></div><div style="left:822px;top:321px;width:1px;height:19px;background:#d5d5d5;"></div><div style="left:966px;top:321px;width:1px;height:19px;background:#d5d5d5;"></div><div style="left:0;top:341px;width:1116px;height:19px;background:#ffffff;"></div><div style="left:0;top:360px;width:1116px;height:1px;background:#d5d5d5;"></div><svg style="left:21px;top:343.2px" width="13" height="13" viewBox="0 0 13 13">
<rect x="0.500" y="0.500" width="12" height="12" fill="#fff" stroke="#4a86b8" stroke-width="1"/>
<path d="M3 6.500l2.400 2.500 4.600-5" stroke="#8d8d8d" stroke-width="1.100" fill="none"/>
</svg><div class="t" style="left:40px;top:343px;height:17px;line-height:17px;font-size:12px;color:#1f1f1f;">|</div><div style="left:63.5px;top:349.9px;width:5.800px;height:5.900px;border-left:1.400px solid #2a2a2a;border-bottom:1.400px solid #2a2a2a;"></div><div class="t" style="left:74px;top:343px;height:17px;line-height:17px;font-size:12px;color:#1f1f1f;">Take Profit</div><div class="t" style="left:391px;top:343px;height:17px;line-height:17px;font-size:12px;color:#1f1f1f;">200.0</div><div class="t" style="left:536px;top:343px;height:17px;line-height:17px;font-size:12px;color:#828282;">200.0</div><div class="t" style="left:681px;top:343px;height:17px;line-height:17px;font-size:12px;color:#828282;">20.0</div><div class="t" style="left:826px;top:343px;height:17px;line-height:17px;font-size:12px;color:#828282;">2000.0</div><div style="left:387px;top:341px;width:1px;height:19px;background:#d5d5d5;"></div><div style="left:532px;top:341px;width:1px;height:19px;background:#d5d5d5;"></div><div style="left:677px;top:341px;width:1px;height:19px;background:#d5d5d5;"></div><div style="left:822px;top:341px;width:1px;height:19px;background:#d5d5d5;"></div><div style="left:966px;top:341px;width:1px;height:19px;background:#d5d5d5;"></div><div style="left:0;top:361px;width:1116px;height:19px;background:#ebebeb;"></div><div style="left:0;top:380px;width:1116px;height:1px;background:#d5d5d5;"></div><svg style="left:21px;top:363.2px" width="13" height="13" viewBox="0 0 13 13">
<rect x="0.500" y="0.500" width="12" height="12" fill="#fff" stroke="#4a86b8" stroke-width="1"/>
<path d="M3 6.500l2.400 2.500 4.600-5" stroke="#8d8d8d" stroke-width="1.100" fill="none"/>
</svg><div class="t" style="left:40px;top:363px;height:17px;line-height:17px;font-size:12px;color:#1f1f1f;">|</div><div style="left:54px;top:369.9px;width:5.800px;height:5.900px;border-left:1.400px solid #2a2a2a;border-bottom:1.400px solid #2a2a2a;"></div><div class="t" style="left:64px;top:363px;height:17px;line-height:17px;font-size:12px;color:#1f1f1f;">If the type is &quot;Atr&quot;</div><div style="left:387px;top:361px;width:1px;height:19px;background:#d5d5d5;"></div><div style="left:532px;top:361px;width:1px;height:19px;background:#d5d5d5;"></div><div style="left:677px;top:361px;width:1px;height:19px;background:#d5d5d5;"></div><div style="left:822px;top:361px;width:1px;height:19px;background:#d5d5d5;"></div><div style="left:966px;top:361px;width:1px;height:19px;background:#d5d5d5;"></div><div style="left:0;top:381px;width:1116px;height:19px;background:#ffffff;"></div><div style="left:0;top:400px;width:1116px;height:1px;background:#d5d5d5;"></div><svg style="left:21px;top:383.2px" width="13" height="13" viewBox="0 0 13 13">
<rect x="0.500" y="0.500" width="12" height="12" fill="#fff" stroke="#4a86b8" stroke-width="1"/>
<path d="M3 6.500l2.400 2.500 4.600-5" stroke="#8d8d8d" stroke-width="1.100" fill="none"/>
</svg><div class="t" style="left:40px;top:383px;height:17px;line-height:17px;font-size:12px;color:#1f1f1f;">|</div><div style="left:63.5px;top:389.9px;width:5.800px;height:5.900px;border-left:1.400px solid #2a2a2a;border-bottom:1.400px solid #2a2a2a;"></div><div class="t" style="left:74px;top:383px;height:17px;line-height:17px;font-size:12px;color:#1f1f1f;">Period</div><div class="t" style="left:391px;top:383px;height:17px;line-height:17px;font-size:12px;color:#1f1f1f;">14</div><div class="t" style="left:536px;top:383px;height:17px;line-height:17px;font-size:12px;color:#828282;">14</div><div class="t" style="left:681px;top:383px;height:17px;line-height:17px;font-size:12px;color:#828282;">1</div><div class="t" style="left:826px;top:383px;height:17px;line-height:17px;font-size:12px;color:#828282;">140</div><div style="left:387px;top:381px;width:1px;height:19px;background:#d5d5d5;"></div><div style="left:532px;top:381px;width:1px;height:19px;background:#d5d5d5;"></div><div style="left:677px;top:381px;width:1px;height:19px;background:#d5d5d5;"></div><div style="left:822px;top:381px;width:1px;height:19px;background:#d5d5d5;"></div><div style="left:966px;top:381px;width:1px;height:19px;background:#d5d5d5;"></div><div style="left:0;top:401px;width:1116px;height:19px;background:#ebebeb;"></div><div style="left:0;top:420px;width:1116px;height:1px;background:#d5d5d5;"></div><svg style="left:21px;top:403.2px" width="13" height="13" viewBox="0 0 13 13">
<rect x="0.500" y="0.500" width="12" height="12" fill="#fff" stroke="#4a86b8" stroke-width="1"/>
<path d="M3 6.500l2.400 2.500 4.600-5" stroke="#8d8d8d" stroke-width="1.100" fill="none"/>
</svg><div class="t" style="left:40px;top:403px;height:17px;line-height:17px;font-size:12px;color:#1f1f1f;">|</div><div style="left:63.5px;top:409.9px;width:5.800px;height:5.900px;border-left:1.400px solid #2a2a2a;border-bottom:1.400px solid #2a2a2a;"></div><div class="t" style="left:74px;top:403px;height:17px;line-height:17px;font-size:12px;color:#1f1f1f;">Atr multiplier</div><div class="t" style="left:391px;top:403px;height:17px;line-height:17px;font-size:12px;color:#1f1f1f;">3.0</div><div class="t" style="left:536px;top:403px;height:17px;line-height:17px;font-size:12px;color:#828282;">2.0</div><div class="t" style="left:681px;top:403px;height:17px;line-height:17px;font-size:12px;color:#828282;">0.2</div><div class="t" style="left:826px;top:403px;height:17px;line-height:17px;font-size:12px;color:#828282;">20.0</div><div style="left:387px;top:401px;width:1px;height:19px;background:#d5d5d5;"></div><div style="left:532px;top:401px;width:1px;height:19px;background:#d5d5d5;"></div><div style="left:677px;top:401px;width:1px;height:19px;background:#d5d5d5;"></div><div style="left:822px;top:401px;width:1px;height:19px;background:#d5d5d5;"></div><div style="left:966px;top:401px;width:1px;height:19px;background:#d5d5d5;"></div><div style="left:0;top:421px;width:1116px;height:19px;background:#ffffff;"></div><div style="left:0;top:440px;width:1116px;height:1px;background:#d5d5d5;"></div><svg style="left:2px;top:423px" width="17" height="14" viewBox="0 0 17 14">
<path d="M2.300 6.500V1.900q0-0.700 0.700-0.700h3.300l1.300 1.700h6.200q0.700 0 0.700 0.700v4" fill="#f6dd8c" stroke="#dcb347" stroke-width="0.900"/>
<path d="M3.300 3.200h9.500v3.300h-9.500z" fill="#f3efe4"/>
<path d="M0.300 6.600h13.200l1.500 6.700H2.100z" fill="#fcd116" stroke="#e2b422" stroke-width="0.900" stroke-linejoin="round"/>
</svg><div class="t" style="left:22px;top:423px;height:17px;line-height:17px;font-size:12px;color:#000;font-weight:700;letter-spacing:-0.28px;">Stop Loss</div><div style="left:0;top:441px;width:1116px;height:19px;background:#ebebeb;"></div><div style="left:0;top:460px;width:1116px;height:1px;background:#d5d5d5;"></div><svg style="left:21px;top:443.2px" width="13" height="13" viewBox="0 0 13 13">
<rect x="0.500" y="0.500" width="12" height="12" fill="#fff" stroke="#4a86b8" stroke-width="1"/>
<path d="M3 6.500l2.400 2.500 4.600-5" stroke="#8d8d8d" stroke-width="1.100" fill="none"/>
</svg><div class="t" style="left:40px;top:443px;height:17px;line-height:17px;font-size:12px;color:#1f1f1f;">|Stop Loss Type</div><div class="t" style="left:391px;top:443px;height:17px;line-height:17px;font-size:12px;color:#1f1f1f;">Atr</div><div class="t" style="left:536px;top:443px;height:17px;line-height:17px;font-size:12px;color:#828282;">Fixed</div><div class="t" style="left:826px;top:443px;height:17px;line-height:17px;font-size:12px;color:#828282;">Atr</div><div style="left:387px;top:441px;width:1px;height:19px;background:#d5d5d5;"></div><div style="left:532px;top:441px;width:1px;height:19px;background:#d5d5d5;"></div><div style="left:677px;top:441px;width:1px;height:19px;background:#d5d5d5;"></div><div style="left:822px;top:441px;width:1px;height:19px;background:#d5d5d5;"></div><div style="left:966px;top:441px;width:1px;height:19px;background:#d5d5d5;"></div><div style="left:0;top:461px;width:1116px;height:19px;background:#ffffff;"></div><div style="left:0;top:480px;width:1116px;height:1px;background:#d5d5d5;"></div><svg style="left:21px;top:463.2px" width="13" height="13" viewBox="0 0 13 13">
<rect x="0.500" y="0.500" width="12" height="12" fill="#fff" stroke="#4a86b8" stroke-width="1"/>
<path d="M3 6.500l2.400 2.500 4.600-5" stroke="#8d8d8d" stroke-width="1.100" fill="none"/>
</svg><div class="t" style="left:40px;top:463px;height:17px;line-height:17px;font-size:12px;color:#1f1f1f;">|</div><div style="left:54px;top:469.9px;width:5.800px;height:5.900px;border-left:1.400px solid #2a2a2a;border-bottom:1.400px solid #2a2a2a;"></div><div class="t" style="left:64px;top:463px;height:17px;line-height:17px;font-size:12px;color:#1f1f1f;">If the type is &quot;Fixo&quot;;</div><div style="left:387px;top:461px;width:1px;height:19px;background:#d5d5d5;"></div><div style="left:532px;top:461px;width:1px;height:19px;background:#d5d5d5;"></div><div style="left:677px;top:461px;width:1px;height:19px;background:#d5d5d5;"></div><div style="left:822px;top:461px;width:1px;height:19px;background:#d5d5d5;"></div><div style="left:966px;top:461px;width:1px;height:19px;background:#d5d5d5;"></div><div style="left:0;top:481px;width:1116px;height:19px;background:#ebebeb;"></div><div style="left:0;top:500px;width:1116px;height:1px;background:#d5d5d5;"></div><svg style="left:21px;top:483.2px" width="13" height="13" viewBox="0 0 13 13">
<rect x="0.500" y="0.500" width="12" height="12" fill="#fff" stroke="#4a86b8" stroke-width="1"/>
<path d="M3 6.500l2.400 2.500 4.600-5" stroke="#8d8d8d" stroke-width="1.100" fill="none"/>
</svg><div class="t" style="left:40px;top:483px;height:17px;line-height:17px;font-size:12px;color:#1f1f1f;">|</div><div style="left:63.5px;top:489.9px;width:5.800px;height:5.900px;border-left:1.400px solid #2a2a2a;border-bottom:1.400px solid #2a2a2a;"></div><div class="t" style="left:74px;top:483px;height:17px;line-height:17px;font-size:12px;color:#1f1f1f;">Stop Loss</div><div class="t" style="left:391px;top:483px;height:17px;line-height:17px;font-size:12px;color:#1f1f1f;">200.0</div><div class="t" style="left:536px;top:483px;height:17px;line-height:17px;font-size:12px;color:#828282;">200.0</div><div class="t" style="left:681px;top:483px;height:17px;line-height:17px;font-size:12px;color:#828282;">20.0</div><div class="t" style="left:826px;top:483px;height:17px;line-height:17px;font-size:12px;color:#828282;">2000.0</div><div style="left:387px;top:481px;width:1px;height:19px;background:#d5d5d5;"></div><div style="left:532px;top:481px;width:1px;height:19px;background:#d5d5d5;"></div><div style="left:677px;top:481px;width:1px;height:19px;background:#d5d5d5;"></div><div style="left:822px;top:481px;width:1px;height:19px;background:#d5d5d5;"></div><div style="left:966px;top:481px;width:1px;height:19px;background:#d5d5d5;"></div><div style="left:0;top:501px;width:1116px;height:19px;background:#ffffff;"></div><div style="left:0;top:520px;width:1116px;height:1px;background:#d5d5d5;"></div><svg style="left:21px;top:503.2px" width="13" height="13" viewBox="0 0 13 13">
<rect x="0.500" y="0.500" width="12" height="12" fill="#fff" stroke="#4a86b8" stroke-width="1"/>
<path d="M3 6.500l2.400 2.500 4.600-5" stroke="#8d8d8d" stroke-width="1.100" fill="none"/>
</svg><div class="t" style="left:40px;top:503px;height:17px;line-height:17px;font-size:12px;color:#1f1f1f;">|</div><div style="left:54px;top:509.9px;width:5.800px;height:5.900px;border-left:1.400px solid #2a2a2a;border-bottom:1.400px solid #2a2a2a;"></div><div class="t" style="left:64px;top:503px;height:17px;line-height:17px;font-size:12px;color:#1f1f1f;">If the type is &quot;Atr&quot;</div><div style="left:387px;top:501px;width:1px;height:19px;background:#d5d5d5;"></div><div style="left:532px;top:501px;width:1px;height:19px;background:#d5d5d5;"></div><div style="left:677px;top:501px;width:1px;height:19px;background:#d5d5d5;"></div><div style="left:822px;top:501px;width:1px;height:19px;background:#d5d5d5;"></div><div style="left:966px;top:501px;width:1px;height:19px;background:#d5d5d5;"></div><div style="left:0;top:521px;width:1116px;height:19px;background:#ebebeb;"></div><div style="left:0;top:540px;width:1116px;height:1px;background:#d5d5d5;"></div><svg style="left:21px;top:523.2px" width="13" height="13" viewBox="0 0 13 13">
<rect x="0.500" y="0.500" width="12" height="12" fill="#fff" stroke="#4a86b8" stroke-width="1"/>
<path d="M3 6.500l2.400 2.500 4.600-5" stroke="#8d8d8d" stroke-width="1.100" fill="none"/>
</svg><div class="t" style="left:40px;top:523px;height:17px;line-height:17px;font-size:12px;color:#1f1f1f;">|</div><div style="left:63.5px;top:529.9px;width:5.800px;height:5.900px;border-left:1.400px solid #2a2a2a;border-bottom:1.400px solid #2a2a2a;"></div><div class="t" style="left:74px;top:523px;height:17px;line-height:17px;font-size:12px;color:#1f1f1f;">Period</div><div class="t" style="left:391px;top:523px;height:17px;line-height:17px;font-size:12px;color:#1f1f1f;">14</div><div class="t" style="left:536px;top:523px;height:17px;line-height:17px;font-size:12px;color:#828282;">14</div><div class="t" style="left:681px;top:523px;height:17px;line-height:17px;font-size:12px;color:#828282;">1</div><div class="t" style="left:826px;top:523px;height:17px;line-height:17px;font-size:12px;color:#828282;">140</div><div style="left:387px;top:521px;width:1px;height:19px;background:#d5d5d5;"></div><div style="left:532px;top:521px;width:1px;height:19px;background:#d5d5d5;"></div><div style="left:677px;top:521px;width:1px;height:19px;background:#d5d5d5;"></div><div style="left:822px;top:521px;width:1px;height:19px;background:#d5d5d5;"></div><div style="left:966px;top:521px;width:1px;height:19px;background:#d5d5d5;"></div><div style="left:0;top:541px;width:1116px;height:19px;background:#ffffff;"></div><div style="left:0;top:560px;width:1116px;height:1px;background:#d5d5d5;"></div><svg style="left:21px;top:543.2px" width="13" height="13" viewBox="0 0 13 13">
<rect x="0.500" y="0.500" width="12" height="12" fill="#fff" stroke="#4a86b8" stroke-width="1"/>
<path d="M3 6.500l2.400 2.500 4.600-5" stroke="#8d8d8d" stroke-width="1.100" fill="none"/>
</svg><div class="t" style="left:40px;top:543px;height:17px;line-height:17px;font-size:12px;color:#1f1f1f;">|</div><div style="left:63.5px;top:549.9px;width:5.800px;height:5.900px;border-left:1.400px solid #2a2a2a;border-bottom:1.400px solid #2a2a2a;"></div><div class="t" style="left:74px;top:543px;height:17px;line-height:17px;font-size:12px;color:#1f1f1f;">Atr multiplier</div><div class="t" style="left:391px;top:543px;height:17px;line-height:17px;font-size:12px;color:#1f1f1f;">1.5</div><div class="t" style="left:536px;top:543px;height:17px;line-height:17px;font-size:12px;color:#828282;">2.0</div><div class="t" style="left:681px;top:543px;height:17px;line-height:17px;font-size:12px;color:#828282;">0.2</div><div class="t" style="left:826px;top:543px;height:17px;line-height:17px;font-size:12px;color:#828282;">20.0</div><div style="left:387px;top:541px;width:1px;height:19px;background:#d5d5d5;"></div><div style="left:532px;top:541px;width:1px;height:19px;background:#d5d5d5;"></div><div style="left:677px;top:541px;width:1px;height:19px;background:#d5d5d5;"></div><div style="left:822px;top:541px;width:1px;height:19px;background:#d5d5d5;"></div><div style="left:966px;top:541px;width:1px;height:19px;background:#d5d5d5;"></div><div style="left:0;top:561px;width:1116px;height:10px;background:#ebebeb;"></div><div style="left:0;top:580px;width:1116px;height:1px;background:#d5d5d5;"></div><svg style="left:2px;top:563px" width="16" height="14" viewBox="0 0 16 14">
<rect x="0.500" y="3.500" width="14" height="10" fill="#dcdcdc" stroke="#b9b9b9" stroke-width="1"/>
<path d="M0.500 5.500V1.200q0-0.700 0.700-0.700h4.500q1.800 0 1.800 2.500v0q0 2.500-1.800 2.500z" fill="#fbd21f" stroke="#e2b013" stroke-width="1"/>
</svg><div class="t" style="left:22px;top:563px;height:17px;line-height:17px;font-size:12px;color:#000;font-weight:700;letter-spacing:-0.28px;">Break Even</div></div>
<div style="left:1134px;top:108px;width:17px;height:571px;background:#f0f0f0;"></div>
<div style="left:1135px;top:125px;width:15px;height:246px;background:#cdcdcd;"></div>
<svg style="left:1137px;top:113px" width="11" height="7" viewBox="0 0 11 7"><path d="M1 5.500l4.500-4.500 4.500 4.500" stroke="#555" stroke-width="1.300" fill="none"/></svg>
<svg style="left:1137px;top:667px" width="11" height="7" viewBox="0 0 11 7"><path d="M1 1l4.500 4.500 4.500-4.500" stroke="#555" stroke-width="1.300" fill="none"/></svg>
<div style="left:18px;top:679px;width:1133px;height:1.3px;background:#4a4a4a;"></div>
<div style="left:150.3px;top:679px;width:52.7px;height:21px;background:#ffffff;border:1.200px solid #505050;border-top:none;border-radius:0 0 2px 2px;"></div>
<div class="t" style="top:682px;height:17px;line-height:17px;font-size:12px;color:#8a8a8a;left:29.8px;letter-spacing:-0.187px;">Overview</div>
<div class="t" style="top:682px;height:17px;line-height:17px;font-size:12px;color:#8a8a8a;left:98.7px;letter-spacing:-0.094px;">Settings</div>
<div class="t" style="top:682px;height:17px;line-height:17px;font-size:12px;color:#111;left:161px;letter-spacing:-0.138px;">Inputs</div>
<div class="t" style="top:682px;height:17px;line-height:17px;font-size:12px;color:#8a8a8a;left:213.5px;letter-spacing:-0.36px;">Backtest</div>
<div class="t" style="top:682px;height:17px;line-height:17px;font-size:12px;color:#8a8a8a;left:277px;letter-spacing:-0.338px;">Graph</div>
<div class="t" style="top:682px;height:17px;line-height:17px;font-size:12px;color:#8a8a8a;left:329.5px;letter-spacing:-0.172px;">Agents</div>
<div class="t" style="top:682px;height:17px;line-height:17px;font-size:12px;color:#8a8a8a;left:385.7px;letter-spacing:-0.343px;">Journal</div>
<div style="left:88px;top:683px;width:1px;height:15px;background:#8a8a8a;"></div>
<div style="left:267px;top:683px;width:1px;height:15px;background:#8a8a8a;"></div>
<div style="left:319px;top:683px;width:1px;height:15px;background:#8a8a8a;"></div>
<div style="left:376px;top:683px;width:1px;height:15px;background:#8a8a8a;"></div>
<div class="t" style="top:683.5px;height:17px;line-height:17px;font-size:12px;color:#222;left:967.6px;letter-spacing:-0.357px;">00:00:06 / 00:06:15</div>
<div style="left:1075px;top:682.3px;width:75px;height:17px;background:#9bcc63;"></div>
<div class="t" style="top:683.6px;height:17px;line-height:17px;font-size:12px;color:#1c3510;left:1099.3px;letter-spacing:-0.086px;">Start</div>
<div class="t" style="left:4.500px;top:700px;width:90px;height:13px;line-height:13px;font-size:12px;letter-spacing:-0.356px;color:#1c2433;transform-origin:0 0;transform:rotate(-90deg);">Strategy Tester</div>
<div style="left:1151px;top:80px;width:4px;height:624px;background:linear-gradient(to right,#f8f8f8,#f2f2f2);"></div>
<div style="left:1155px;top:80px;width:1px;height:624px;background:#b0b0b0;"></div>
<div style="left:1173px;top:84px;width:1px;height:596px;background:#b9b9b9;"></div>
<svg style="left:1160.800px;top:84px" width="10" height="10" viewBox="0 0 10 10"><path d="M2.400 2.400l5.200 5.200M7.600 2.400l-5.200 5.200" stroke="#111" stroke-width="1.500" fill="none"/></svg>
<div style="left:1159.200px;top:98px;width:13.300px;height:603px;background:linear-gradient(to bottom,#d5e2ef,#b7cbdf);"></div>
<div style="left:1174px;top:84px;width:183px;height:595px;background:#ffffff;"></div>
<div style="left:1174px;top:105px;width:183px;height:60px;background:#cacaca;"></div>
<div style="left:1174px;top:679px;width:183px;height:1.3px;background:#4a4a4a;"></div>
<svg style="left:1184px;top:92px" width="8" height="5" viewBox="0 0 8 5"><path d="M0.500 4.200L3.800 0.600 7.100 4.200z" fill="#222"/></svg>
<div class="t" style="top:88px;height:17px;line-height:17px;font-size:12px;color:#222;left:1199.5px;">T</div>
<div class="t" style="top:88px;height:17px;line-height:17px;font-size:12px;color:#222;left:1217px;">T</div>
<div style="left:1224.8px;top:97.5px;width:1.3px;height:1.3px;background:#333;"></div>
<div style="left:1227.1px;top:97.5px;width:1.3px;height:1.3px;background:#333;"></div>
<div style="left:1229.4px;top:97.5px;width:1.3px;height:1.3px;background:#333;"></div>
<div style="left:1240.7px;top:97.5px;width:1.3px;height:1.3px;background:#333;"></div>
<div style="left:1243.0px;top:97.5px;width:1.3px;height:1.3px;background:#333;"></div>
<div style="left:1245.3px;top:97.5px;width:1.3px;height:1.3px;background:#333;"></div>
<div style="left:1257.5px;top:97.5px;width:1.3px;height:1.3px;background:#333;"></div>
<div style="left:1259.8px;top:97.5px;width:1.3px;height:1.3px;background:#333;"></div>
<div style="left:1262.1px;top:97.5px;width:1.3px;height:1.3px;background:#333;"></div>
<div style="left:1274.5px;top:97.5px;width:1.3px;height:1.3px;background:#333;"></div>
<div style="left:1276.8px;top:97.5px;width:1.3px;height:1.3px;background:#333;"></div>
<div style="left:1279.1px;top:97.5px;width:1.3px;height:1.3px;background:#333;"></div>
<div style="left:1291.4px;top:97.5px;width:1.3px;height:1.3px;background:#333;"></div>
<div style="left:1293.7px;top:97.5px;width:1.3px;height:1.3px;background:#333;"></div>
<div style="left:1296.0px;top:97.5px;width:1.3px;height:1.3px;background:#333;"></div>
<div style="left:1308.0px;top:97.5px;width:1.3px;height:1.3px;background:#333;"></div>
<div style="left:1310.3px;top:97.5px;width:1.3px;height:1.3px;background:#333;"></div>
<div style="left:1312.6px;top:97.5px;width:1.3px;height:1.3px;background:#333;"></div>
<div style="left:1324.7px;top:97.5px;width:1.3px;height:1.3px;background:#333;"></div>
<div style="left:1327.0px;top:97.5px;width:1.3px;height:1.3px;background:#333;"></div>
<div style="left:1329.3px;top:97.5px;width:1.3px;height:1.3px;background:#333;"></div>
<div class="t" style="top:87.5px;height:17px;line-height:17px;font-size:10px;color:#222;left:1340.3px;">›</div>
<div style="left:1345.0px;top:97.5px;width:1.3px;height:1.3px;background:#333;"></div>
<div style="left:1347.3px;top:97.5px;width:1.3px;height:1.3px;background:#333;"></div>
<div style="left:1349.6px;top:97.5px;width:1.3px;height:1.3px;background:#333;"></div>
<div style="left:1195px;top:85px;width:1px;height:19px;background:#ececec;"></div>
<div style="left:1210px;top:85px;width:1px;height:19px;background:#ececec;"></div>
<div style="left:1235px;top:85px;width:1px;height:19px;background:#ececec;"></div>
<div style="left:1252px;top:85px;width:1px;height:19px;background:#ececec;"></div>
<div style="left:1268px;top:85px;width:1px;height:19px;background:#ececec;"></div>
<div style="left:1285px;top:85px;width:1px;height:19px;background:#ececec;"></div>
<div style="left:1302px;top:85px;width:1px;height:19px;background:#ececec;"></div>
<div style="left:1319px;top:85px;width:1px;height:19px;background:#ececec;"></div>
<div style="left:1335px;top:85px;width:1px;height:19px;background:#ececec;"></div>
<div style="left:1181.2px;top:112.5px;width:3.2px;height:3.2px;background:#222;border-radius:50%;"></div>
<div class="t" style="top:107px;height:17px;line-height:17px;font-size:12px;color:#111;left:1195.5px;font-weight:700;">Balance: 99 947.00 USD</div>
<div class="t" style="top:127px;height:17px;line-height:17px;font-size:12px;color:#111;left:1195.5px;font-weight:700;">Equity: 99 947.00</div>
<div class="t" style="top:147px;height:17px;line-height:17px;font-size:12px;color:#111;left:1195.5px;font-weight:700;">Free Margin: 99 947.00</div>
<div class="t" style="top:106.5px;height:17px;line-height:17px;font-size:12px;color:#111;left:1342.5px;font-weight:700;letter-spacing:-0.3px;">...</div>
<div style="left:1174.6px;top:679px;width:51.4px;height:21px;background:#ffffff;border:1.200px solid #505050;border-top:none;border-radius:0 0 2px 2px;"></div>
<div class="t" style="top:682px;height:17px;line-height:17px;font-size:12px;color:#111;left:1186px;letter-spacing:-0.476px;">Trade</div>
<div class="t" style="top:682px;height:17px;line-height:17px;font-size:12px;color:#8a8a8a;left:1236px;letter-spacing:-0.385px;">Exposure</div>
<div class="t" style="top:682px;height:17px;line-height:17px;font-size:12px;color:#8a8a8a;left:1304px;letter-spacing:0.111px;">History</div>
<div style="left:1294px;top:683px;width:1px;height:15px;background:#8a8a8a;"></div>
<div style="left:1352px;top:683px;width:1px;height:15px;background:#8a8a8a;"></div>
<div class="t" style="left:1161.300px;top:700.300px;width:50px;height:13px;line-height:13px;font-size:11.800px;color:#1c2433;transform-origin:0 0;transform:rotate(-90deg);">Toolbox</div>
<div style="left:1px;top:701px;width:1150px;height:1px;background:#fafafa;"></div>
<div style="left:1156px;top:701px;width:1204px;height:1px;background:#fafafa;"></div>
<div style="left:1px;top:705px;width:1359px;height:1px;background:#bdbdbd;"></div>
<div style="left:1px;top:706px;width:1359px;height:1px;background:#fafafa;"></div>
<div class="t" style="top:711.5px;height:17px;line-height:17px;font-size:12px;color:#222;left:2.6px;letter-spacing:-0.41px;">For Help, press F1</div>
<div style="left:664px;top:709px;width:1px;height:19px;background:#b9b9b9;"></div>
<div style="left:796px;top:709px;width:1px;height:19px;background:#b9b9b9;"></div>
<div style="left:895px;top:709px;width:1px;height:19px;background:#b9b9b9;"></div>
<div style="left:967px;top:709px;width:1px;height:19px;background:#b9b9b9;"></div>
<div style="left:1038px;top:709px;width:1px;height:19px;background:#b9b9b9;"></div>
<div style="left:1107px;top:709px;width:1px;height:19px;background:#b9b9b9;"></div>
<div style="left:1176px;top:709px;width:1px;height:19px;background:#b9b9b9;"></div>
<div style="left:1243px;top:709px;width:1px;height:19px;background:#b9b9b9;"></div>
<div class="t" style="top:711.5px;height:17px;line-height:17px;font-size:12px;color:#222;left:669.5px;letter-spacing:0.109px;width:126.500px;overflow:hidden;">mt4 profile with build yo</div>
<div class="t" style="top:711.5px;height:17px;line-height:17px;font-size:12px;color:#444;left:1269.7px;letter-spacing:-0.178px;">530 / 6155 Kb</div>
<svg style="left:1249px;top:712px" width="16" height="13" viewBox="0 0 16 13">
<path d="M1.600 11.700v-1.700M4.600 11.700v-3.800M7.600 11.700v-6M10.600 11.700v-8.400M13.600 11.700v-10.900" stroke="#4cc45a" stroke-width="1.900" fill="none"/></svg>
<div style="left:0px;top:728px;width:1360px;height:40px;background:#1b1b1c;"></div>
<div style="left:294.3px;top:728px;width:44.1px;height:40px;background:#424242;"></div>
<div style="left:338.4px;top:728px;width:3px;height:40px;background:#2b2b2b;"></div>
<div style="left:249px;top:766px;width:40px;height:2px;background:#b5b5ae;"></div>
<div style="left:294.3px;top:766px;width:44.1px;height:2px;background:#a0a0a0;"></div>
<div style="left:338.4px;top:766px;width:3px;height:2px;background:#6a6a6a;"></div>
<div style="left:396px;top:766px;width:40px;height:2px;background:#bdbdb6;"></div>
<div style="left:494px;top:766px;width:40px;height:2px;background:#bdbdb6;"></div>
<svg style="left:0;top:728px" width="1360" height="40" viewBox="0 728 1360 40" fill="none"><path d="M15.500 742l7-1v6.400h-7zM23.500 740.850l8.800-1.250v7.800h-8.800zM15.500 748.400h7v6.400l-7-1zM23.500 748.400h8.800v7.700l-8.800-1.250z" fill="#ffffff"/><circle cx="74.300" cy="745.800" r="5.600" stroke="#fff" stroke-width="1.400"/><path d="M70.300 749.900l-6 6" stroke="#fff" stroke-width="1.500"/><path d="M112 741.300v1.800h10.500v-1.800M112 755.300v-1.800h10.500v1.800" stroke="#fff" stroke-width="1.300"/><rect x="113.300" y="744.700" width="8" height="7.200" stroke="#fff" stroke-width="1.300"/><path d="M126.500 740.500v2M126.500 747v8.500" stroke="#fff" stroke-width="1.400"/><rect x="125.500" y="743.500" width="2" height="2.600" fill="#fff"/><defs><linearGradient id="ff" x1="0.780" y1="0.050" x2="0.300" y2="1"><stop offset="0" stop-color="#fff36b"/><stop offset="0.250" stop-color="#ffd03a"/><stop offset="0.500" stop-color="#ff8a2b"/><stop offset="0.780" stop-color="#ff3d4f"/><stop offset="1" stop-color="#e5158a"/></linearGradient>
<linearGradient id="ffp" x1="0.600" y1="0" x2="0.400" y2="1"><stop offset="0" stop-color="#a53ee0"/><stop offset="1" stop-color="#4f5ce6"/></linearGradient>
<linearGradient id="ffo" x1="0" y1="0" x2="1" y2="1"><stop offset="0" stop-color="#ff8a2b"/><stop offset="1" stop-color="#ffb02e"/></linearGradient></defs><path d="M174 735.900q1.800 3 4.500 4.800 0.800-0.300 1-1.200 2.600 3.500 2.700 8.500 0 4.800-3.300 8-3.300 3.300-8.200 3.300-4.800 0-8-3.300-3.100-3.300-3.100-7.800 0-3.800 2.800-8.400l1.200 2 1.700-1.800 1.200 2.300q1.500-0.600 3-0.300 0.300-3.300 2.500-6.100z" fill="url(#ff)"/><circle cx="170.800" cy="748.300" r="4.300" fill="url(#ffp)"/><path d="M162.300 743.300q4-0.600 8.300 2.800l-0.500 1.300q-2.600-0.500-3.700 1.500-1-0.300-1.700-1.500-0.700-1.500-2.400-4.100z" fill="url(#ffo)"/><defs><linearGradient id="v18" x1="0" y1="0" x2="1" y2="1"><stop offset="0" stop-color="#0e2a3c"/><stop offset="0.500" stop-color="#05090d"/><stop offset="1" stop-color="#000"/></linearGradient></defs><rect x="208.500" y="736.500" width="23.300" height="23" fill="url(#v18)" stroke="#26a9e0" stroke-width="1"/><path d="M215.300 742.300l4.600 10.600 4.600-10.600" stroke="#63c9f5" stroke-width="1.700"/><text x="223.200" y="758.300" font-family="Liberation Sans" font-size="6.500" font-weight="700" fill="#63c9f5">18</text><path d="M258.300 740.200q0-1.700 1.700-1.700h5.500l2.200 2h10.800q1.600 0 1.600 1.600v13h-21.800z" fill="#e8a714"/><path d="M258.300 743q0-1 1-1h20q0.800 0 0.800 1v12.800q0 1-1 1h-19.800q-1 0-1-1z" fill="#ffd866"/><path d="M262.300 756.800v-7.300q0-1 1-1h12q1 0 1 1v7.300h-3v-5h-8v5z" fill="#3a95e0"/><rect x="265.300" y="751.800" width="8" height="5" fill="#f4c232"/><circle cx="317.800" cy="748" r="11.700" fill="#fbc116"/><path d="M317.800 748L307.670 742.150A11.700 11.700 0 0 1 327.930 742.150z" fill="#e33b2e"/><path d="M317.800 736.300A11.700 11.700 0 0 1 327.930 742.150H317.800z" fill="#e33b2e"/><path d="M307.670 742.150A11.700 11.700 0 0 0 317.800 759.700L322.870 750.930 317.800 748z" fill="#2da94f"/><path d="M307.670 742.150L312.730 750.930 317.800 759.700A11.700 11.700 0 0 1 307.670 742.150z" fill="#2da94f"/><path d="M312.730 750.930L317.800 759.700A11.700 11.700 0 0 1 307.670 742.150z" fill="#2da94f"/><path d="M317.800 742.150H327.930A11.700 11.700 0 0 1 317.800 759.700L322.870 750.930z" fill="#fbc116"/><circle cx="317.800" cy="748" r="5.500" fill="#ffffff"/><circle cx="317.800" cy="748" r="4.300" fill="#3b7ded"/><path d="M366.200 736.600v22.100l-11.100-10.900z" fill="#1f57b6"/><path d="M367.400 736.600l11.200 11.200-11.200 10.900z" fill="#1f57b6"/><path d="M358.300 751.200l8-7.800M361.500 754.300l4.800-4.700" stroke="#1b1b1c" stroke-width="1.300"/><path d="M367.400 743.300l5.200 4.500-4.600 5.300-0.600-0.600z" fill="#1b1b1c"/><g transform="translate(404.200,734.600) scale(1.440)">
<path d="M3 8.300q-0.300-4.300 2.800-5.300 0.500-2 2.500-2t2.500 2q3.100 1 2.800 5.300z" fill="#3f9e3a"/>
<circle cx="8.300" cy="2.500" r="1.500" fill="#8fdc7c"/><path d="M4.500 7q0.500-3 3.800-3" stroke="#8fdc7c" stroke-width="0.800" fill="none"/>
<path d="M0.200 12.500q-0.200-4 3.600-5.200l4.500 5.700-2.300 3.500q-3.300 1-5.800-4z" fill="#dcc02a"/>
<circle cx="2.300" cy="10.300" r="1.400" fill="#f3e37a"/><circle cx="1.800" cy="14" r="1.400" fill="#f0dc62"/>
<path d="M16.200 12.500q0.200-4-3.600-5.200l-4.500 5.700 2.300 3.500q3.300 1 5.800-4z" fill="#2f8fd6"/>
<circle cx="14.300" cy="13.800" r="1.400" fill="#9ad4f7"/><circle cx="11.800" cy="15.300" r="1.200" fill="#7cc4f2"/>
<circle cx="8.250" cy="9.800" r="3.200" fill="#f7f1ea"/>
<text x="8.250" y="11.900" font-family="Liberation Sans" font-size="5.800" font-weight="700" fill="#f09a3a" text-anchor="middle">5</text>
</g><path d="M464 740h10.500v16H464z" fill="#f5cf1c"/><path d="M455.500 738.300l12-2.300v24l-12-3z" fill="#d99a12"/><path d="M455.500 755l12 2.300 7-1.300v0.500l-7 3.500-12-3z" fill="#f0c019"/><text x="461.700" y="750.500" font-family="Liberation Sans" font-size="10.500" font-weight="700" fill="#fff6dc" text-anchor="middle">5</text><rect x="502.500" y="736.400" width="22.500" height="21.200" rx="3" fill="#b9120a"/><path d="M508 753.500q3.500-2.300 5-8.300 0.900-4-0.400-4-1.200 0.200-0.400 3.200 1.500 5.200 6.800 6.700 2 0.200 1.800-0.700-0.700-1-4-0.500-4.800 0.800-8.300 3-1.600 1.300-0.500 1.700" stroke="#fff" stroke-width="1.200" stroke-linecap="round" stroke-linejoin="round"/><path d="M1284.500 741l1.700 1.300-7.300 12.200-2.700 1.400 0.300-3z" stroke="#fff" stroke-width="1.100" stroke-linejoin="round"/><path d="M1276 750.800q-3.800 0.700-3.700 3 0.200 2 3.200 1.800M1284.300 748.500q3.300 0.600 3.300 2.200-0.200 1.500-3 1.800" stroke="#fff" stroke-width="1.100" stroke-linecap="round"/></svg>
<div class="t" style="top:732px;height:14px;line-height:14px;font-size:11.8px;color:#fff;left:1306.9px;letter-spacing:-0.341px;">8:42 PM</div>
<div class="t" style="top:750px;height:14px;line-height:14px;font-size:11.8px;color:#fff;left:1303px;letter-spacing:-0.25px;">1/18/2023</div>
</body></html>
